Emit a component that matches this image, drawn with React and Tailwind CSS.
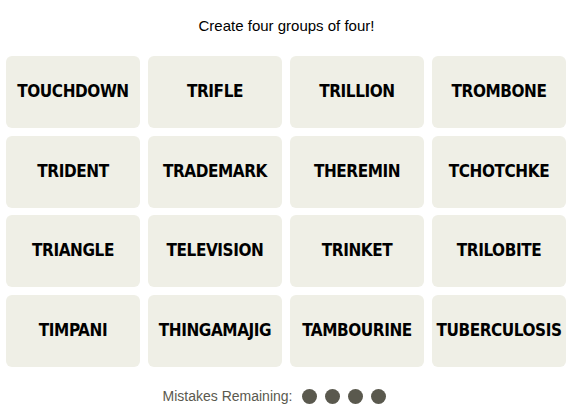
const words = [
  'TOUCHDOWN', 'TRIFLE', 'TRILLION', 'TROMBONE',
  'TRIDENT', 'TRADEMARK', 'THEREMIN', 'TCHOTCHKE',
  'TRIANGLE', 'TELEVISION', 'TRINKET', 'TRILOBITE',
  'TIMPANI', 'THINGAMAJIG', 'TAMBOURINE', 'TUBERCULOSIS',
];

export default function App() {
  return (
    <div className="w-[573px] h-[407px] bg-white font-['Liberation_Sans',sans-serif]">
      <p className="pt-[16px] text-center text-[15px] leading-5 text-black">Create four groups of four!</p>
      <div className="mt-[20px] grid grid-cols-4 gap-x-[8px] gap-y-[7.5px] pl-[6px] pr-[7px]">
        {words.map((w) => (
          <div key={w} className="h-[72px] rounded-[6px] bg-[#efefe6] flex items-center justify-center">
            <span className="font-['Liberation_Sans_Narrow','DejaVu_Sans_Condensed',sans-serif] font-bold text-[17px] text-black tracking-tight">{w}</span>
          </div>
        ))}
      </div>
      <div className="mt-[19px] pr-[24px] flex items-center justify-center gap-[10px]">
        <span className="text-[14px] text-[#5a594e]">Mistakes Remaining:</span>
        <div className="flex gap-[8px]">
          {[0, 1, 2, 3].map((i) => (
            <span key={i} className="w-[15px] h-[15px] rounded-full bg-[#5a594e]" />
          ))}
        </div>
      </div>
    </div>
  );
}
